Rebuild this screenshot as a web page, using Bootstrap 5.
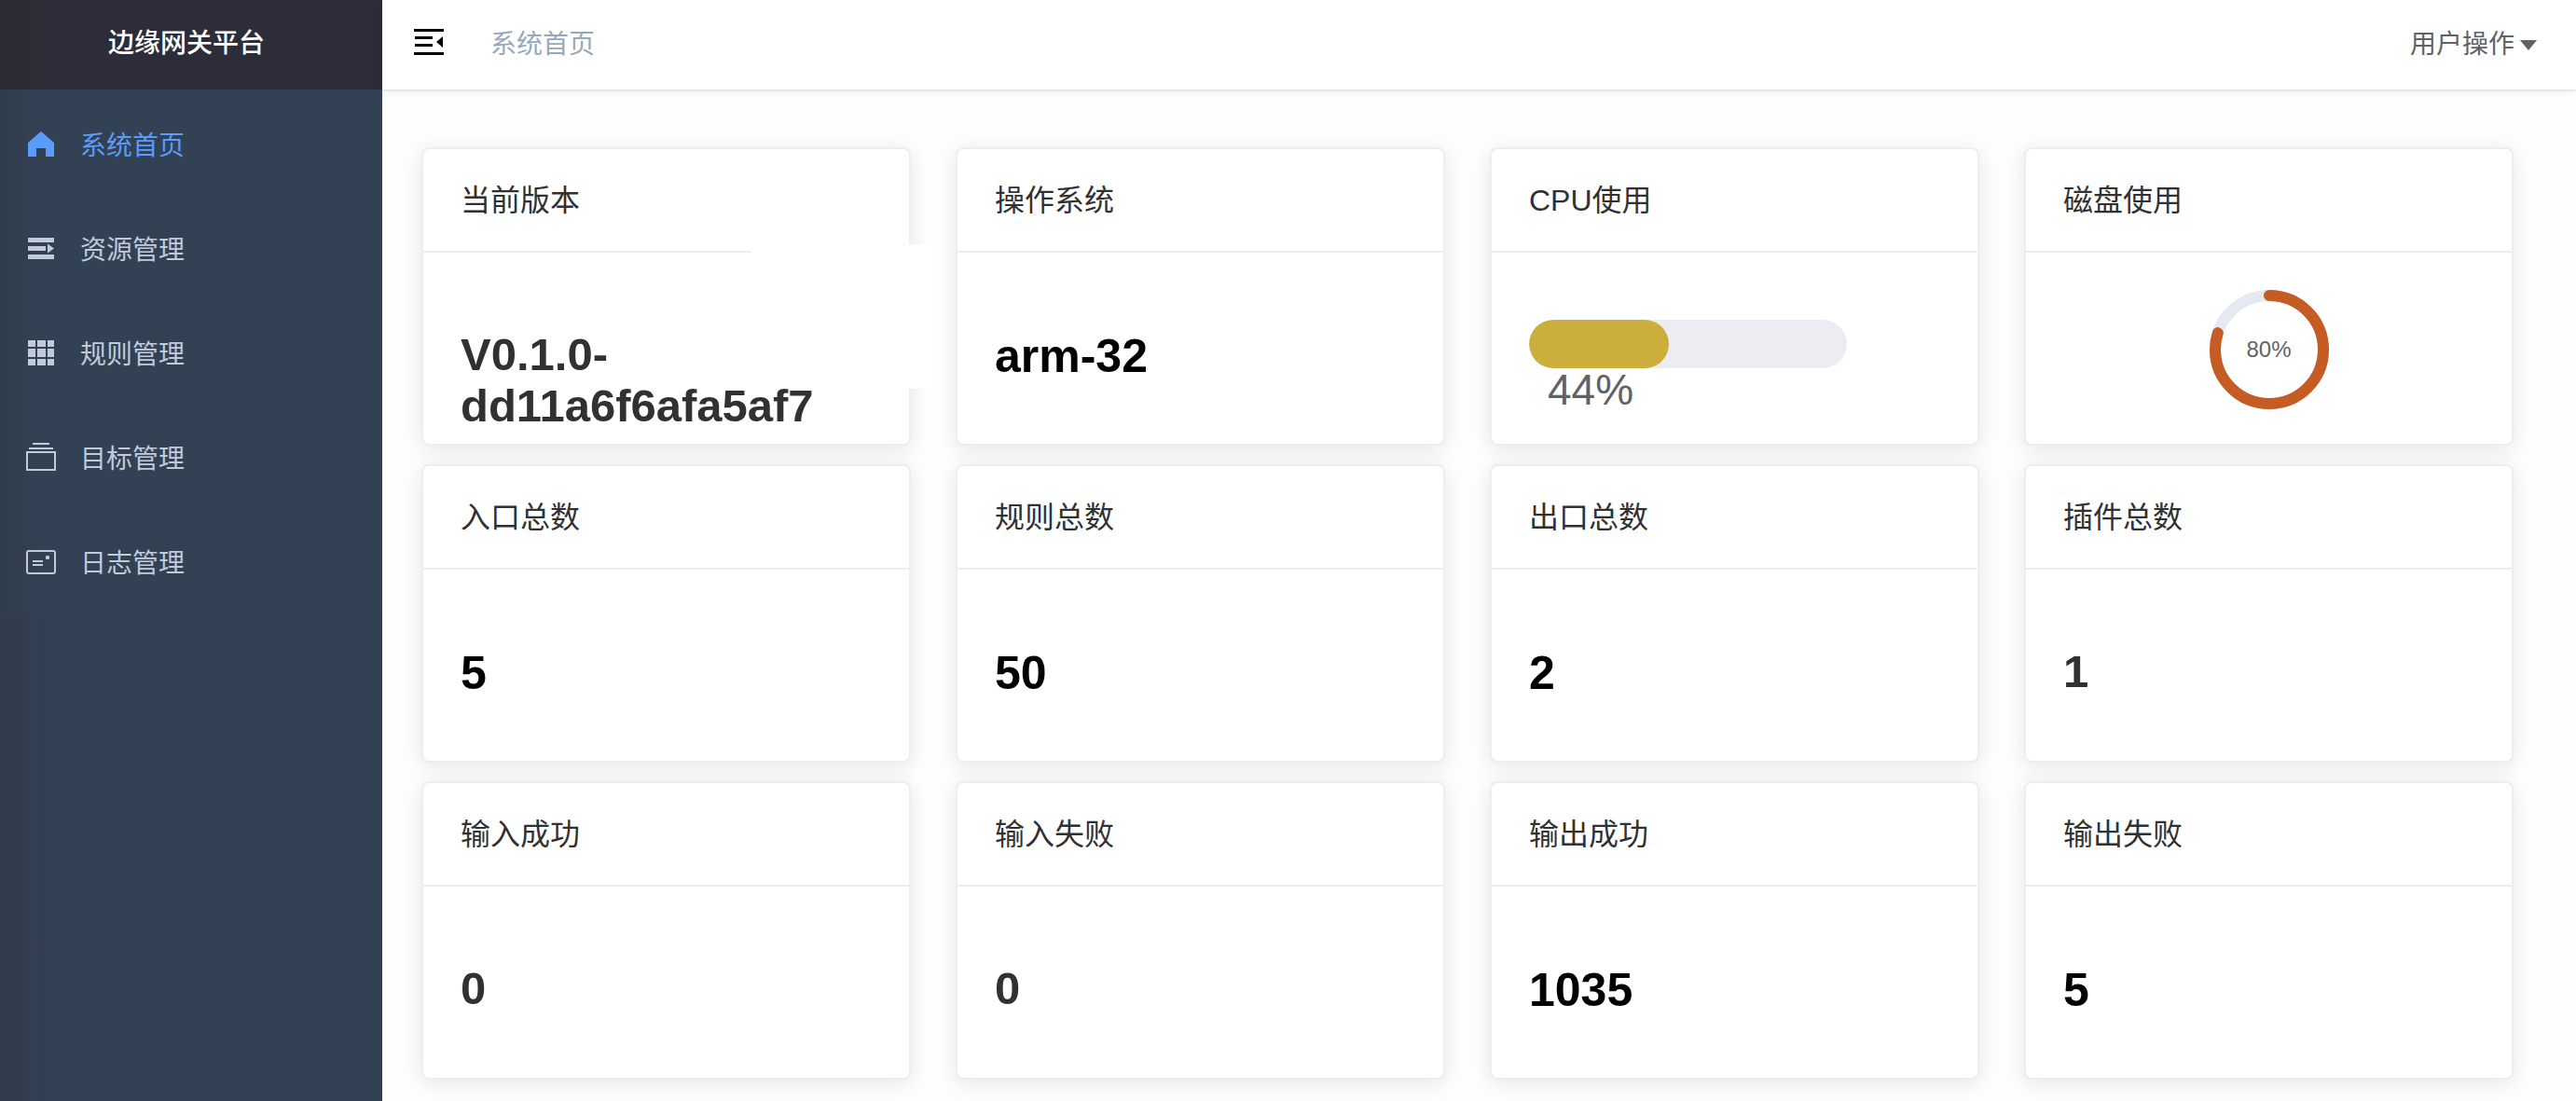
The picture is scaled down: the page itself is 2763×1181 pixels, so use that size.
<!DOCTYPE html>
<html lang="zh-CN">
<head>
<meta charset="utf-8">
<meta name="viewport" content="width=device-width, initial-scale=1">
<title>边缘网关平台</title>
<link href="https://cdn.jsdelivr.net/npm/bootstrap@5.3.0/dist/css/bootstrap.min.css" rel="stylesheet">
<style>
body{font-family:"Liberation Sans","Noto Sans CJK SC",sans-serif;font-size:28px;line-height:40px;color:#303133;background:#fefefe}
.side{width:410px;background:linear-gradient(90deg,#303b4c 0,#334053 50px)}
.brand{height:96px;background:linear-gradient(90deg,#2a2b33 0,#2d2d39 50px);color:#fff;font-size:28px;font-weight:500;padding:0 10px 3px 0}
.side .nav{background:linear-gradient(90deg,#303d4e 0,#334154 50px);padding-top:5px}
.side .nav-link{height:112px;padding:0 24px;gap:22px;color:#bfcbd9}
.side .nav-link.active{color:#5a9cf8}
.side svg{width:40px;height:40px;margin-bottom:4px}
.topbar{height:96px;padding:0 42px 0 30px;background:#fff;box-shadow:0 1px 2px rgba(0,0,0,.12),0 4px 12px rgba(0,0,0,.05);z-index:1}
.fold{margin-bottom:6px}
.crumb{color:#97a8be;margin-left:46px}
.user{color:#606266;font-size:28px;line-height:40px;gap:6px}
.user svg{width:18px;height:12px}
.board{padding:62px 67px 23px 42px}
.board .row{--bs-gutter-x:48px;--bs-gutter-y:20px}
.stat{height:320px;border:2px solid #ededf3;border-radius:8px;box-shadow:0 4px 24px rgba(0,0,0,.1);background:#fff}
.stat .card-header{height:111px;flex-shrink:0;background:none;border-bottom:2px solid #ededf3;padding:0 40px;font-size:32px}
.stat .card-body{padding:82px 40px 0}
.num{font-size:50px;line-height:58px;font-weight:700;color:#000}
.num-dark{font-size:49px;line-height:55px;font-weight:700;color:#303133}
.patch{left:352px;top:102px;width:205px;height:155px;background:#fff}
.stat .cpu{padding:72px 140px 0 40px}
.meter{height:52px;border-radius:26px;background:#ebedf3}
.meter .progress-bar{border-radius:26px;background:#ccae3d}
.cpu-text{font-size:46px;line-height:46px;color:#606266;padding-left:20px}
.stat .disk{padding:40px}
.ring,.ring svg{width:128px;height:128px}
.ring span{font-size:24px;color:#606266}
</style>
</head>
<body>
<div class="d-flex min-vh-100">
  <aside class="side flex-shrink-0">
    <div class="brand d-flex align-items-center justify-content-center">边缘网关平台</div>
    <nav class="nav flex-column">
      <a class="nav-link active d-flex align-items-center" href="#"><svg viewBox="0 0 40 40" fill="currentColor"><path d="M20 6 34 18V33H25V24H15V33H6V18z"/></svg>系统首页</a>
      <a class="nav-link d-flex align-items-center" href="#"><svg viewBox="0 0 40 40" fill="currentColor"><path d="M6 8H34V13H6zM6 17H25V22H6zM6 26H34V31H6zM27 14.500 34 19.500 27 24.500z"/></svg>资源管理</a>
      <a class="nav-link d-flex align-items-center" href="#"><svg viewBox="0 0 40 40" fill="currentColor"><path d="M6 6h8v7H6zM16 6h9v7h-9zM27 6h7v7h-7zM6 15h8v9H6zM16 15h9v9h-9zM27 15h7v9h-7zM6 26h8v7H6zM16 26h9v7h-9zM27 26h7v7h-7z"/></svg>规则管理</a>
      <a class="nav-link d-flex align-items-center" href="#"><svg viewBox="0 0 40 40" fill="none" stroke="currentColor" stroke-width="2"><path d="M11 5H29M7 10H33M5 14H35V33H5z"/></svg>目标管理</a>
      <a class="nav-link d-flex align-items-center" href="#"><svg viewBox="0 0 40 40" fill="none" stroke="currentColor" stroke-width="2"><rect x="5" y="8" width="30" height="24" rx="2"/><path d="M11 19H22M11 23H22"/><circle cx="27" cy="15" r="2.200" fill="currentColor" stroke="none"/></svg>日志管理</a>
    </nav>
  </aside>
  <div class="flex-grow-1">
    <header class="topbar d-flex align-items-center position-relative">
      <button class="btn p-0 border-0 fold d-flex" type="button" aria-label="折叠菜单"><svg viewBox="0 0 40 40" width="40" height="40"><path d="M4 6H36V9H4zM5 14H24V17H5zM5 22H24V25H5zM4 31H36V34H4zM35 14V26L28 20z"/></svg></button>
      <span class="crumb">系统首页</span>
      <button class="btn user p-0 border-0 ms-auto d-flex align-items-center" type="button">用户操作 <svg viewBox="0 0 18 12" fill="currentColor"><path d="M0 1H18L9 12z"/></svg></button>
    </header>
    <main class="board">
      <div class="row">
        <div class="col-3"><section class="card stat"><div class="patch position-absolute"></div><div class="card-header d-flex align-items-center">当前版本</div><div class="card-body"><div class="num-dark position-relative">V0.1.0-<br>dd11a6f6afa5af7</div></div></section></div>
        <div class="col-3"><section class="card stat"><div class="card-header d-flex align-items-center">操作系统</div><div class="card-body"><div class="num">arm-32</div></div></section></div>
        <div class="col-3"><section class="card stat"><div class="card-header d-flex align-items-center">CPU使用</div><div class="card-body cpu"><div class="progress meter" role="progressbar" aria-label="CPU使用" aria-valuenow="44" aria-valuemin="0" aria-valuemax="100"><div class="progress-bar" style="width:44%"></div></div><div class="cpu-text">44%</div></div></section></div>
        <div class="col-3"><section class="card stat"><div class="card-header d-flex align-items-center">磁盘使用</div><div class="card-body disk"><div class="ring position-relative mx-auto d-flex align-items-center justify-content-center"><svg class="position-absolute" viewBox="0 0 128 128" fill="none" stroke-width="12"><circle cx="64" cy="64" r="58" stroke="#e5e9f2"/><circle cx="64" cy="64" r="58" stroke="#c45c23" stroke-linecap="round" pathLength="100" stroke-dasharray="80 100" transform="rotate(-90 64 64)"/></svg><span>80%</span></div></div></section></div>
        <div class="col-3"><section class="card stat"><div class="card-header d-flex align-items-center">入口总数</div><div class="card-body"><div class="num">5</div></div></section></div>
        <div class="col-3"><section class="card stat"><div class="card-header d-flex align-items-center">规则总数</div><div class="card-body"><div class="num">50</div></div></section></div>
        <div class="col-3"><section class="card stat"><div class="card-header d-flex align-items-center">出口总数</div><div class="card-body"><div class="num">2</div></div></section></div>
        <div class="col-3"><section class="card stat"><div class="card-header d-flex align-items-center">插件总数</div><div class="card-body"><div class="num-dark">1</div></div></section></div>
        <div class="col-3"><section class="card stat"><div class="card-header d-flex align-items-center">输入成功</div><div class="card-body"><div class="num-dark">0</div></div></section></div>
        <div class="col-3"><section class="card stat"><div class="card-header d-flex align-items-center">输入失败</div><div class="card-body"><div class="num-dark">0</div></div></section></div>
        <div class="col-3"><section class="card stat"><div class="card-header d-flex align-items-center">输出成功</div><div class="card-body"><div class="num">1035</div></div></section></div>
        <div class="col-3"><section class="card stat"><div class="card-header d-flex align-items-center">输出失败</div><div class="card-body"><div class="num">5</div></div></section></div>
      </div>
    </main>
  </div>
</div>
<script src="https://cdn.jsdelivr.net/npm/bootstrap@5.3.0/dist/js/bootstrap.bundle.min.js"></script>
</body>
</html>
